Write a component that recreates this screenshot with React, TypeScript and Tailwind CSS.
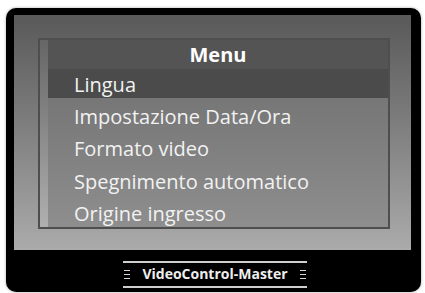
const items = [
  "Impostazione Data/Ora",
  "Formato video",
  "Spegnimento automatico",
  "Origine ingresso",
];

function Bars() {
  return (
    <div className="flex w-[6px] flex-col gap-[2.5px]">
      <div className="h-[1.5px] bg-[#d8d8d8]" />
      <div className="h-[1.5px] bg-[#d8d8d8]" />
      <div className="h-[1.5px] bg-[#d8d8d8]" />
    </div>
  );
}

export default function App() {
  return (
    <div className="h-[293px] w-[425px] overflow-hidden bg-white pl-[6px] pt-[8px] font-['Open_Sans',sans-serif]">
      {/* Monitor frame */}
      <div className="flex h-[284px] w-[415px] flex-col rounded-[10px] bg-black pl-[8px] pr-[10px] pt-[7px] shadow-[0_0_3px_rgba(0,0,0,0.35)]">
        {/* Screen */}
        <div className="h-[235px] bg-gradient-to-b from-[#595959] to-[#ababab] pb-[21px] pl-[24px] pr-[21px] pt-[23px]">
          <div className="flex h-full border-2 border-[#4e4e4e]">
            <div className="w-[8px] bg-gradient-to-b from-[#666] to-[#b0b0b0]" />
            <div className="flex flex-1 flex-col overflow-hidden bg-gradient-to-b from-[#6c6c6c] to-[#8e8e8e]">
              <div className="flex h-[29px] items-center justify-center bg-[#545454] text-[20px] font-bold text-white">
                Menu
              </div>
              <div className="h-[2px] bg-[#929292]" />
              <div className="h-[29px] shrink-0 bg-[#4b4b4b] pl-[26px] pt-[6px] text-[20px] leading-[20px] text-[#f2f2f2]">
                Lingua
              </div>
              {items.map((t) => (
                <div
                  key={t}
                  className="h-[32.3px] shrink-0 pl-[26px] pt-[9px] text-[20px] leading-[20px] text-[#f2f2f2]"
                >
                  {t}
                </div>
              ))}
            </div>
          </div>
        </div>

        {/* Brand label */}
        <div className="pl-[109px] pt-[11px]">
          <div className="flex w-[184px] flex-col">
            <div className="h-[1.5px] bg-[#cfcfcf]" />
            <div className="flex h-[23.5px] items-center justify-between px-[1px]">
              <Bars />
              <span className="text-[14px] font-bold leading-none text-[#eeeeee]">
                VideoControl-Master
              </span>
              <Bars />
            </div>
            <div className="h-[1.5px] bg-[#cfcfcf]" />
          </div>
        </div>
      </div>
    </div>
  );
}
